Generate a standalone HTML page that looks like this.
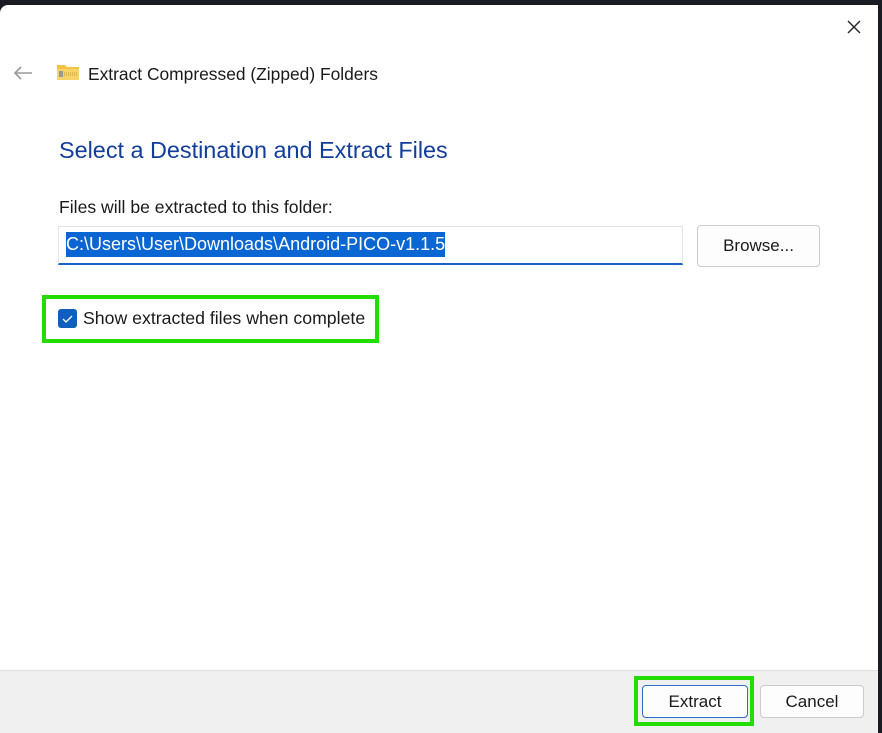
<!DOCTYPE html>
<html><head><style>
*{margin:0;padding:0;box-sizing:border-box}
body{width:882px;height:733px;background:#1a1c24;position:relative;overflow:hidden;font-family:"Liberation Sans",sans-serif;}
.win{position:absolute;left:0;top:5px;width:878px;height:728px;background:#fff;border-top-left-radius:8px;}
.t{position:absolute;white-space:nowrap;color:#1a1a1a}
.footer{position:absolute;left:0;top:665px;width:878px;height:63px;background:#f0f0f0;border-top:1px solid #e0e0e0}
.btn{position:absolute;background:#fdfdfd;border:1px solid #ccc;border-radius:4px;font-size:17px;text-align:center;color:#1a1a1a}
.green{position:absolute;border:4px solid #22dd00}
</style></head><body>
<div class="win">
<svg style="position:absolute;left:846px;top:14px" width="16" height="16"><path d="M2 2L14 14M14 2L2 14" stroke="#222" stroke-width="1.4"/></svg>
<svg style="position:absolute;left:12px;top:60px" width="22" height="16"><path d="M20 8H3M9 2L3 8L9 14" stroke="#999" stroke-width="1.6" fill="none"/></svg>
<svg style="position:absolute;left:56px;top:57px" width="24" height="20"><path d="M1 3h8l2 2h12v13H1z" fill="#f5c342"/><rect x="1" y="7" width="22" height="11" fill="#f8d468"/><rect x="3" y="9" width="4" height="6" fill="#999"/><path d="M8 11h14M8 13h14" stroke="#b08820" stroke-width="0.8" stroke-dasharray="1 1"/></svg>
<div class="t" style="left:88px;top:59px;font-size:17.4px">Extract Compressed (Zipped) Folders</div>
<div class="t" style="left:59px;top:132px;font-size:23.4px;color:#123d9a">Select a Destination and Extract Files</div>
<div class="t" style="left:59px;top:192px;font-size:17.6px">Files will be extracted to this folder:</div>
<div style="position:absolute;left:58px;top:221px;width:625px;height:39px;border:1px solid #e4e4e4;border-bottom:2px solid #1a64c8"></div>
<div class="t" style="left:66px;top:227px;height:25px;width:379px;background:#0a66d2;color:#fff;font-size:18px;line-height:25px">C:\Users\User\Downloads\Android-PICO-v1.1.5</div>
<div class="btn" style="left:697px;top:220px;width:123px;height:42px;line-height:40px">Browse...</div>
<div class="green" style="left:42px;top:290px;width:337px;height:48px"></div>
<div style="position:absolute;left:58px;top:304px;width:19px;height:19px;background:#0f5fc0;border-radius:3px"><svg width="19" height="19"><path d="M5 10l3 3l6-6" stroke="#fff" stroke-width="1.3" fill="none"/></svg></div>
<div class="t" style="left:83px;top:303px;font-size:17.7px">Show extracted files when complete</div>
<div class="footer"></div>
<div class="green" style="left:634px;top:671px;width:120px;height:50px"></div>
<div class="btn" style="left:642px;top:680px;width:106px;height:33px;line-height:31px;border-color:#2a6fc9">Extract</div>
<div class="btn" style="left:760px;top:680px;width:104px;height:33px;line-height:31px">Cancel</div>
</div>
</body></html>
